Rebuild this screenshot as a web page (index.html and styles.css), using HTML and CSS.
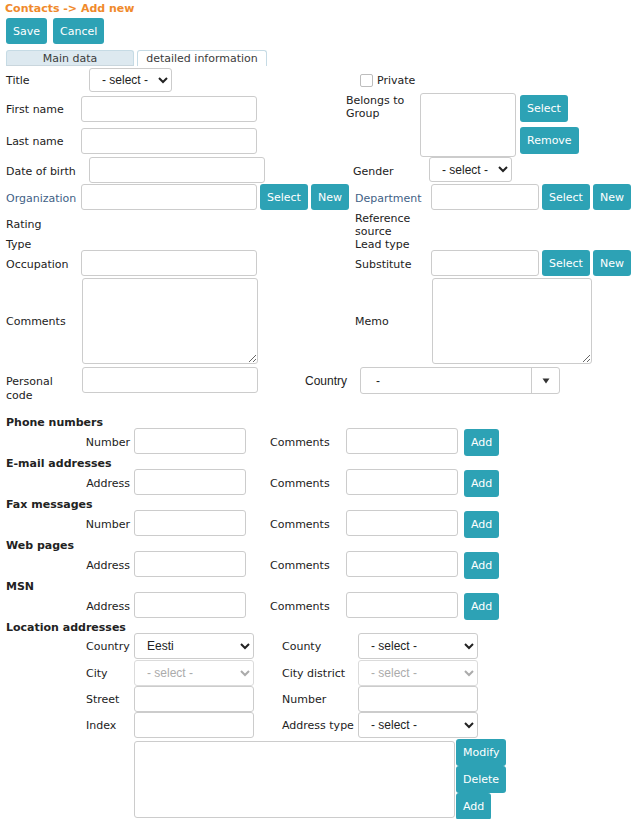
FILE: index.html
```html
<!DOCTYPE html>
<html lang="en">
<head>
<meta charset="utf-8">
<title>Contacts - Add new</title>
<link rel="stylesheet" href="styles.css">
</head>
<body>
<div class="page">
  <div class="crumb">Contacts -&gt; Add new</div>

  <div class="toolbar">
    <button class="btn">Save</button>
    <button class="btn">Cancel</button>
  </div>

  <div class="tabs">
    <div class="tab tab-main">Main data</div>
    <div class="tab tab-detail">detailed information</div>
  </div>

  <div class="form-top">
    <div class="row r-title">
      <span class="lab">Title</span>
      <span class="lf"><select class="sel sel-title"><option>- select -</option></select></span>
      <span class="rlab rlab-private"><label class="chk"><input type="checkbox"><span>Private</span></label></span>
    </div>

    <div class="row r-pair">
      <div class="pair-left">
        <div class="row r-name"><span class="lab">First name</span><span class="lf"><input class="txt w176" type="text"></span></div>
        <div class="row r-name"><span class="lab">Last name</span><span class="lf"><input class="txt w176" type="text"></span></div>
      </div>
      <div class="group-lab">Belongs to<br>Group</div>
      <div class="group-box"></div>
      <div class="group-btns">
        <button class="btn">Select</button>
        <button class="btn">Remove</button>
      </div>
    </div>

    <div class="row r-std">
      <span class="lab">Date of birth</span>
      <span class="lf"><input class="txt w176 shift" type="text"></span>
      <span class="rlab rlab-gender">Gender</span>
      <span class="rf"><select class="sel sel-gender"><option>- select -</option></select></span>
    </div>

    <div class="row r-std">
      <span class="lab lab-link">Organization</span>
      <span class="lf"><input class="txt w176" type="text"><button class="btn">Select</button><button class="btn">New</button></span>
      <span class="rlab lab-link">Department</span>
      <span class="rf"><input class="txt w108" type="text"><button class="btn">Select</button><button class="btn">New</button></span>
    </div>

    <div class="row r-ref">
      <span class="lab">Rating</span>
      <span class="lf"></span>
      <span class="rlab rlab-two">Reference<br>source</span>
    </div>

    <div class="row r-type">
      <span class="lab">Type</span>
      <span class="lf"></span>
      <span class="rlab">Lead type</span>
    </div>

    <div class="row r-std">
      <span class="lab">Occupation</span>
      <span class="lf"><input class="txt w176" type="text"></span>
      <span class="rlab">Substitute</span>
      <span class="rf"><input class="txt w108" type="text"><button class="btn">Select</button><button class="btn">New</button></span>
    </div>

    <div class="row r-comments">
      <span class="lab">Comments</span>
      <span class="lf"><textarea class="area area-comments"></textarea></span>
      <span class="rlab">Memo</span>
      <span class="rf"><textarea class="area area-memo"></textarea></span>
    </div>

    <div class="row r-personal">
      <span class="lab lab-two">Personal<br>code</span>
      <input class="txt w176 nudge" type="text">
      <span class="country-lab">Country</span>
      <div class="combo">
        <span class="combo-val">-</span>
        <span class="combo-btn"><svg width="8" height="6" viewBox="0 0 8 6"><path d="M0.5 0.5h7L4 5.5z" fill="#333"/></svg></span>
      </div>
    </div>
  </div>

  <div class="sections">
    <div class="sec-head">Phone numbers</div>
    <div class="sec-row">
      <span class="s-lab">Number</span><input class="txt s-in" type="text">
      <span class="s-lab2">Comments</span><input class="txt s-in" type="text">
      <button class="btn btn-add">Add</button>
    </div>

    <div class="sec-head">E-mail addresses</div>
    <div class="sec-row">
      <span class="s-lab">Address</span><input class="txt s-in" type="text">
      <span class="s-lab2">Comments</span><input class="txt s-in" type="text">
      <button class="btn btn-add">Add</button>
    </div>

    <div class="sec-head">Fax messages</div>
    <div class="sec-row">
      <span class="s-lab">Number</span><input class="txt s-in" type="text">
      <span class="s-lab2">Comments</span><input class="txt s-in" type="text">
      <button class="btn btn-add">Add</button>
    </div>

    <div class="sec-head">Web pages</div>
    <div class="sec-row">
      <span class="s-lab">Address</span><input class="txt s-in" type="text">
      <span class="s-lab2">Comments</span><input class="txt s-in" type="text">
      <button class="btn btn-add">Add</button>
    </div>

    <div class="sec-head">MSN</div>
    <div class="sec-row">
      <span class="s-lab">Address</span><input class="txt s-in" type="text">
      <span class="s-lab2">Comments</span><input class="txt s-in" type="text">
      <button class="btn btn-add">Add</button>
    </div>

    <div class="sec-head">Location addresses</div>
    <div class="loc">
      <div class="loc-row loc-first">
        <span class="l-lab">Country</span>
        <select class="sel l-sel"><option>Eesti</option></select>
        <span class="l-lab2">County</span>
        <select class="sel l-sel"><option>- select -</option></select>
      </div>
      <div class="loc-row">
        <span class="l-lab">City</span>
        <select class="sel l-sel" disabled><option>- select -</option></select>
        <span class="l-lab2">City district</span>
        <select class="sel l-sel" disabled><option>- select -</option></select>
      </div>
      <div class="loc-row">
        <span class="l-lab">Street</span>
        <input class="txt l-in" type="text">
        <span class="l-lab2">Number</span>
        <input class="txt l-in" type="text">
      </div>
      <div class="loc-row">
        <span class="l-lab">Index</span>
        <input class="txt l-in" type="text">
        <span class="l-lab2">Address type</span>
        <select class="sel l-sel"><option>- select -</option></select>
      </div>
      <div class="loc-list">
        <div class="loc-box"></div>
        <div class="loc-btns">
          <button class="btn">Modify</button>
          <button class="btn">Delete</button>
          <button class="btn">Add</button>
        </div>
      </div>
    </div>
  </div>
</div>
</body>
</html>
```

FILE: styles.css
```css
html {
  overflow: hidden;
}

body {
  margin: 0;
  font: 11px "DejaVu Sans", Verdana, sans-serif;
  color: #222;
  background: #fff;
}

.page {
  padding-left: 6px;
}

/* breadcrumb */
.crumb {
  margin-left: -1px;
  height: 16px;
  line-height: 18px;
  font-weight: bold;
  color: #f08a2c;
}

/* buttons */
.btn {
  box-sizing: border-box;
  height: 26px;
  padding: 0 7px;
  border: 0;
  border-radius: 3px;
  background: #2da2b5;
  color: #fff;
  font: 11px "DejaVu Sans", Verdana, sans-serif;
  cursor: pointer;
  flex: none;
}

.toolbar {
  display: flex;
  gap: 6px;
  margin-top: 2px;
}

/* tabs */
.tabs {
  display: flex;
  gap: 3px;
  margin-top: 6px;
  height: 16px;
}

.tab {
  box-sizing: border-box;
  height: 16px;
  line-height: 15px;
  text-align: center;
  color: #3c3c3c;
  border: 1px solid #c6dbe5;
  border-bottom: 0;
  border-radius: 3px 3px 0 0;
}

.tab-main {
  width: 128px;
  background: #dde9f0;
  border-bottom: 1px solid #c9d6dd;
}

.tab-detail {
  width: 130px;
  background: #fff;
}

/* upper form */
.row {
  display: flex;
  align-items: flex-start;
}

.lab {
  flex: none;
  width: 75px;
  padding-top: 2px;
  line-height: 26px;
}

.lab-link {
  color: #3f5f86;
}

.lf {
  flex: none;
  width: 265px;
  display: flex;
  gap: 3px;
}

.rlab {
  flex: none;
  box-sizing: border-box;
  width: 85px;
  padding-left: 9px;
  padding-top: 2px;
  line-height: 26px;
}

.rf {
  display: flex;
  gap: 3px;
}

.txt {
  flex: none;
  box-sizing: border-box;
  height: 26px;
  padding: 0 4px;
  border: 1px solid #ccc;
  border-radius: 3px;
  background: #fff;
  font: 12px "DejaVu Sans", Verdana, sans-serif;
  outline: none;
}

.w176 { width: 176px; }
.w108 { width: 108px; }
.shift { margin-left: 8px; }

.sel {
  flex: none;
  box-sizing: border-box;
  height: 25px;
  padding-left: 8px;
  border: 1px solid #ccc;
  border-radius: 3px;
  background: #fff;
  color: #222;
  font: 12px "Liberation Sans", Arial, sans-serif;
}

.sel:disabled {
  color: #888;
}

.r-title {
  height: 27px;
  align-items: center;
}

.r-title .lab {
  line-height: 14px;
  padding-top: 2px;
}

.sel-title {
  width: 83px;
  height: 24px;
  margin-left: 8px;
}

.rlab-private {
  padding-left: 14px;
  padding-top: 2px;
  line-height: 14px;
}

.chk {
  display: flex;
  align-items: center;
  gap: 4px;
  white-space: nowrap;
}

/* light rounded checkbox */
.chk input {
  appearance: none;
  margin: 0;
  width: 13px;
  height: 13px;
  border: 1px solid #bdbdbd;
  border-radius: 2px;
  background: #fff;
}

.r-pair {
  height: 64px;
}

.pair-left {
  flex: none;
  width: 340px;
}

.r-name {
  height: 32px;
  align-items: center;
}

.r-name .lab {
  padding-top: 1px;
}

.group-lab {
  flex: none;
  width: 74px;
  padding-top: 1px;
  line-height: 13px;
}

.group-box {
  flex: none;
  box-sizing: border-box;
  width: 96px;
  height: 64px;
  border: 1px solid #ccc;
  border-radius: 3px;
}

.group-btns {
  display: flex;
  flex-direction: column;
  align-items: flex-start;
  gap: 5px;
  margin: 2px 0 0 4px;
}

.group-btns .btn { height: 27px; }

.r-std {
  height: 27px;
}

.rlab-gender {
  width: 83px;
  padding-left: 7px;
}

.sel-gender {
  width: 83px;
}

.r-ref {
  height: 27px;
  align-items: center;
}

.r-ref .lab {
  padding-top: 0;
}

.rlab-two {
  padding-top: 0;
  line-height: 13px;
}

.r-type {
  height: 12px;
}

.r-type .lab,
.r-type .rlab {
  padding-top: 1px;
  line-height: 12px;
}

.r-comments {
  height: 87px;
  align-items: center;
}

.r-comments .lab,
.r-comments .rlab {
  line-height: 14px;
}

.area {
  box-sizing: border-box;
  height: 86px;
  border: 1px solid #ccc;
  border-radius: 3px;
  font: 12px "DejaVu Sans", Verdana, sans-serif;
  outline: none;
  margin: 0;
}

.area-comments {
  width: 176px;
  margin-left: 1px;
}

.area-memo {
  width: 160px;
  margin-left: 1px;
}

.r-personal {
  height: 33px;
}

.r-personal .lab-two {
  padding-top: 0;
  line-height: 14px;
  margin-top: 11px;
}

.nudge {
  margin: 3px 0 0 1px;
}

.country-lab {
  margin: 4px 0 0 47px;
  width: 55px;
  font: 12px "Liberation Sans", Arial, sans-serif;
  line-height: 27px;
}

.combo {
  flex: none;
  box-sizing: border-box;
  display: flex;
  width: 200px;
  height: 27px;
  margin-top: 3px;
  border: 1px solid #ccc;
  border-radius: 3px;
  font: 12px "Liberation Sans", Arial, sans-serif;
}

.combo-val {
  flex: 1;
  padding-left: 15px;
  line-height: 26px;
}

.combo-btn {
  width: 27px;
  border-left: 1px solid #ccc;
  display: flex;
  align-items: center;
  justify-content: center;
}

/* lower sections */
.sections {
  margin-top: 18px;
}

.sec-head {
  height: 13px;
  line-height: 15px;
  font-weight: bold;
}

.sec-row {
  display: flex;
  align-items: flex-start;
  height: 28px;
}

.s-lab {
  flex: none;
  box-sizing: border-box;
  width: 128px;
  padding-right: 4px;
  padding-top: 2px;
  text-align: right;
  line-height: 26px;
}

.s-lab2 {
  flex: none;
  width: 76px;
  margin-left: 24px;
  padding-top: 2px;
  line-height: 26px;
}

.s-in {
  width: 112px;
}

.btn-add {
  height: 27px;
  margin: 1px 0 0 6px;
}

.loc-row {
  display: flex;
  align-items: flex-start;
  height: 26px;
}

.loc-first {
  height: 27px;
}

.l-lab {
  flex: none;
  box-sizing: border-box;
  width: 128px;
  padding-left: 80px;
  padding-top: 1px;
  line-height: 26px;
}

.l-lab2 {
  flex: none;
  width: 76px;
  margin-left: 28px;
  padding-top: 1px;
  line-height: 26px;
  white-space: nowrap;
}

.l-sel {
  width: 120px;
  height: 26px;
}

.l-in {
  width: 120px;
}

.loc-list {
  display: flex;
  align-items: flex-start;
  margin-left: 128px;
}

.loc-box {
  flex: none;
  box-sizing: border-box;
  width: 321px;
  height: 77px;
  margin-top: 3px;
  border: 1px solid #ccc;
  border-radius: 3px;
}

.loc-btns {
  display: flex;
  flex-direction: column;
  align-items: flex-start;
  margin: 1px 0 0 1px;
}

.loc-btns .btn {
  height: 27px;
}
```
